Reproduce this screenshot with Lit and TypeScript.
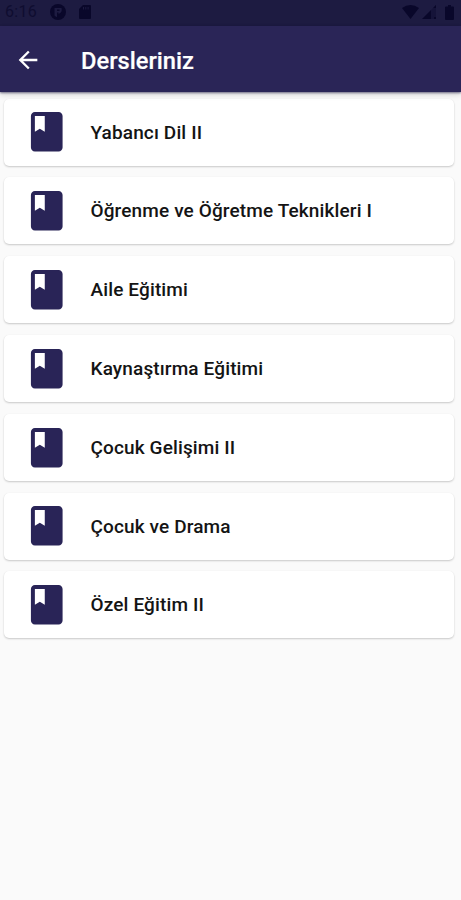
import { LitElement, html, css } from "lit";
import { customElement, property } from "lit/decorators.js";

@customElement("status-bar")
class StatusBar extends LitElement {
  static styles = css`
    :host { display: flex; align-items: center; height: 26px; box-sizing: border-box; padding: 0 5px 2px 5px; background: #1d1b41; color: #0f0d30; }
    .time { width: 45px; font: 400 16px/24px Roboto, sans-serif; letter-spacing: 0.3px; }
    .app { width: 16px; height: 16px; margin-right: 13px; }
    .card { width: 12px; height: 14px; }
    .signals { display: flex; align-items: center; margin-left: auto; }
    .wifi { width: 17px; height: 14px; margin-right: 3px; }
    .cell { width: 14px; height: 14px; margin-right: 9px; }
    .battery { width: 9px; height: 15px; margin-right: 2px; }
    svg { display: block; fill: #09072a; }
    .faint { opacity: 0.35; }
    .hole { fill: #1d1b41; }
  `;
  render() {
    return html`
      <span class="time">6:16</span>
      <svg class="app" viewBox="0 0 16 16"><circle cx="8" cy="8" r="8" /><path class="hole" d="M4.500 4H11.500A5 5 0 0 1 8.500 10V8.500H7V13.200A5.500 5.500 0 0 1 4.500 11.500z" /><path d="M7 5.500h2.500V7H7z" /></svg>
      <svg class="card" viewBox="0 0 12 14"><path d="M4 0h7a1 1 0 0 1 1 1v12a1 1 0 0 1-1 1H1a1 1 0 0 1-1-1V4z" /><path class="hole" d="M4 2h1v2.500H4zM6.300 2h1v2.500h-1zM8.600 2h1v2.500h-1z" /></svg>
      <div class="signals">
        <svg class="wifi" viewBox="0 0 17 14"><path d="M0 3Q8.500-3 17 3L8.500 14z" /></svg>
        <svg class="cell" viewBox="0 0 14 14"><path d="M0 14 9 5v9z" /><path class="faint" d="M9 5l5-5v14H9z" /><path d="M11.500 2.500 14 0v3h-2.500zM12 12h2v2h-2z" /></svg>
        <svg class="battery" viewBox="0 0 9 15"><path d="M3 0h3v1.500h2a1 1 0 0 1 1 1V14a1 1 0 0 1-1 1H1a1 1 0 0 1-1-1V2.500a1 1 0 0 1 1-1h2z" /></svg>
      </div>
    `;
  }
}

@customElement("course-card")
class CourseCard extends LitElement {
  @property() name = "";
  static styles = css`
    :host { display: flex; align-items: center; height: 67px; border-radius: 5px; background: #fff; box-shadow: 0 1px 2px rgba(0, 0, 0, 0.2), 0 0 1px rgba(0, 0, 0, 0.04); }
    .icon { display: block; flex: none; width: 47.500px; height: 47.500px; margin: 0 20px 0 19px; fill: #292457; }
    .name { padding-top: 1px; font: 500 19px/24px Roboto, sans-serif; letter-spacing: 0.13px; color: #141414; white-space: nowrap; }
  `;
  render() {
    return html`
      <svg class="icon" viewBox="0 0 24 24"><path d="M18 2H6c-1.100 0-2 .9-2 2v16c0 1.100.9 2 2 2h12c1.100 0 2-.9 2-2V4c0-1.100-.9-2-2-2zM6 4h5v8l-2.500-1.500L6 12V4z" /></svg>
      <span class="name">${this.name}</span>
    `;
  }
}

@customElement("app-root")
class AppRoot extends LitElement {
  static styles = css`
    :host { display: flex; flex-direction: column; height: 900px; background: #fafafa; }
    .bar { position: relative; display: flex; align-items: center; height: 66px; background: #2a2557; color: #fff; box-shadow: 0 1px 2px rgba(20, 15, 60, 0.55), 0 3px 6px rgba(0, 0, 0, 0.14); }
    .back { display: block; width: 28px; height: 28px; margin: 1px 39px 0 14px; fill: #fff; }
    h1 { margin: 3px 0 0; font: 500 23.700px/30px Roboto, sans-serif; -webkit-text-stroke: 0.2px #fff; }
    .list { display: flex; flex-direction: column; gap: 11.800px; padding: 6.700px 7px 0 4px; }
  `;
  courses = [
    "Yabancı Dil II",
    "Öğrenme ve Öğretme Teknikleri I",
    "Aile Eğitimi",
    "Kaynaştırma Eğitimi",
    "Çocuk Gelişimi II",
    "Çocuk ve Drama",
    "Özel Eğitim II",
  ];
  render() {
    return html`
      <status-bar></status-bar>
      <header class="bar">
        <svg class="back" viewBox="0 0 24 24"><path d="M20 11H7.830l5.590-5.590L12 4l-8 8 8 8 1.410-1.410L7.830 13H20v-2z" /></svg>
        <h1>Dersleriniz</h1>
      </header>
      <main class="list">${this.courses.map((c) => html`<course-card .name=${c}></course-card>`)}</main>
    `;
  }
}
